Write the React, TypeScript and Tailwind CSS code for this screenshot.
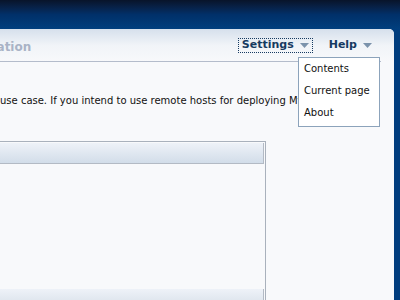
import React from 'react';

function Caret() {
  return (
    <svg width="9" height="5" viewBox="0 0 9 5" className="ml-[6px] mt-[1px]">
      <path d="M0 0 H9 L4.5 5 Z" fill="#7b92ab" />
    </svg>
  );
}

export default function App() {
  return (
    <div className="relative w-[400px] h-[300px] overflow-hidden bg-[#003d7e] font-['DejaVu_Sans',sans-serif]">
      <div className="h-[29px] bg-gradient-to-b from-[#08142a] via-[#013069] to-[#003f7e]" />
      <div className="flex">
        <div className="w-[394px] h-[271px] rounded-tr-[5px] bg-[#f8f9fb] overflow-hidden">
          <div className="bg-gradient-to-b from-[#d6e0ec] via-[#f1f4f8] to-[#f8f9fb]">
            <div className="mr-[13px] h-[33px] flex items-center border-b border-[#b4bccb]">
              <span className="ml-[-61px] mt-[3px] text-[12px] font-bold text-[#a9b3c6] whitespace-nowrap">Configuration</span>
              <div className="ml-auto flex items-center gap-[16px] pr-[9px] text-[11px] font-bold text-[#163a61]">
                <div className="flex items-center h-[15px] px-[3px] border border-dotted border-[#163a61]">
                  Settings
                  <Caret />
                </div>
                <div className="flex items-center">
                  Help
                  <Caret />
                </div>
              </div>
            </div>
          </div>
          <p className="mt-[32px] text-[10px] leading-[13px] text-[#111] whitespace-nowrap">
            use case. If you intend to use remote hosts for deploying MySQL
          </p>
          <div className="mt-[34px] w-[266px] h-[160px] border-t border-r border-[#a9b1bc] pt-[1px] pr-[1px] flex flex-col">
            <div className="h-[21px] bg-gradient-to-b from-[#eef2f8] to-[#d2dde9] border-b border-r border-[#b3bac4]" />
            <div className="h-[125px]" />
            <div className="flex-1 bg-gradient-to-b from-[#eef2f8] to-[#dfe6ee] border-r border-[#b3bac4]" />
          </div>
        </div>
      </div>
      <div className="absolute left-[298px] top-[57px] w-[82px] h-[70px] bg-white border border-[#8ca3bb] text-[10px] leading-[12px] text-[#111] flex flex-col gap-[10px] pt-[5px] pl-[5px]">
        <div>Contents</div>
        <div>Current page</div>
        <div>About</div>
      </div>
    </div>
  );
}
